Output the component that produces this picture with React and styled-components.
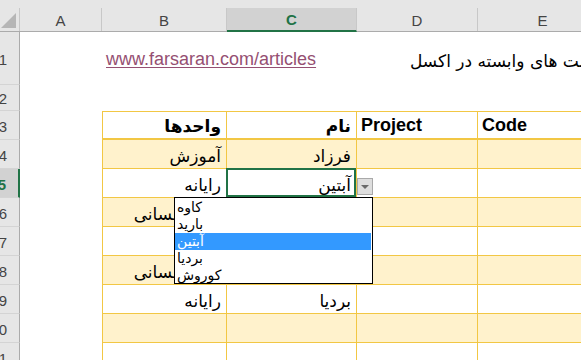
import React from "react";
import styled, { createGlobalStyle } from "styled-components";

const GlobalStyle = createGlobalStyle`
  * { box-sizing: border-box; }
  html, body { margin: 0; padding: 0; background: #ffffff; }
  body {
    width: 581px;
    height: 360px;
    overflow: hidden;
    font-family: "Liberation Sans", "DejaVu Sans", sans-serif;
  }
`;

const COLS = [
  { key: "A", w: 82 },
  { key: "B", w: 125 },
  { key: "C", w: 130 },
  { key: "D", w: 121 },
  { key: "E", w: 130 },
];

const YELLOW = "#f2c744";
const FILL = "#fff2cc";
const GREEN = "#217346";

const Sheet = styled.div`
  width: 581px;
  height: 360px;
  overflow: hidden;
  display: flex;
  flex-direction: column;
`;

const TopStrip = styled.div`
  height: 8px;
  flex: none;
  background: #e6e6e6;
`;

const HeaderRow = styled.div`
  display: flex;
  flex: none;
  height: 24px;
  background: #e6e6e6;
  border-bottom: 1px solid #ababab;
`;

const Corner = styled.div`
  position: relative;
  width: 20px;
  flex: none;
  border-right: 1px solid #c8c8c8;

  &::after {
    content: "";
    position: absolute;
    right: 3px;
    bottom: 3px;
    width: 0;
    height: 0;
    border-style: solid;
    border-width: 0 0 15px 15px;
    border-color: transparent transparent #b6b6b6 transparent;
  }
`;

const ColHead = styled.div`
  width: ${(p) => p.$w}px;
  flex: none;
  display: flex;
  align-items: center;
  justify-content: center;
  padding-top: 1px;
  font-size: 15px;
  color: ${(p) => (p.$active ? GREEN : "#444444")};
  font-weight: ${(p) => (p.$active ? 700 : 400)};
  background: ${(p) => (p.$active ? "#d2d2d2" : "transparent")};
  border-right: 1px solid #c8c8c8;
  border-bottom: ${(p) => (p.$active ? `2px solid ${GREEN}` : "none")};
  margin-bottom: ${(p) => (p.$active ? "-1px" : "0")};
`;

const Row = styled.div`
  display: flex;
  flex: none;
  height: ${(p) => p.$h}px;
`;

const RowHead = styled.div`
  width: 20px;
  flex: none;
  display: flex;
  align-items: center;
  justify-content: flex-end;
  overflow: hidden;
  padding: 2px 12px 0 0;
  font-size: 15px;
  color: ${(p) => (p.$active ? GREEN : "#444444")};
  font-weight: ${(p) => (p.$active ? 700 : 400)};
  background: ${(p) => (p.$active ? "#d2d2d2" : "#e6e6e6")};
  border-bottom: 1px solid #d4d4d4;
  border-right: ${(p) => (p.$active ? `2px solid ${GREEN}` : "1px solid #ababab")};
`;

const Cell = styled.div`
  position: relative;
  width: ${(p) => p.$w}px;
  flex: none;
  height: 100%;
  display: flex;
  align-items: flex-end;
  justify-content: ${(p) => (p.$rtl ? "flex-end" : "flex-start")};
  white-space: nowrap;
  padding: 0 5px ${(p) => p.$pb ?? 2}px 4px;
  font-size: 18px;
  font-weight: ${(p) => (p.$bold ? 700 : 400)};
  color: #000000;
  background: ${(p) => (p.$fill ? FILL : "transparent")};
  border-top: ${(p) => (p.$top ? `1px solid ${YELLOW}` : "none")};
  border-left: ${(p) => (p.$left ? `1px solid ${YELLOW}` : "none")};
  border-right: ${(p) => (p.$table ? `1px solid ${YELLOW}` : "none")};
  border-bottom: ${(p) =>
    p.$table ? `${p.$thick ? 2 : 1}px solid ${YELLOW}` : "none"};
  z-index: ${(p) => (p.$selected ? 5 : "auto")};

  ${(p) =>
    p.$selected &&
    `
    box-shadow: inset 0 0 0 2px ${GREEN};
    margin-left: -1px;
    width: ${p.$w + 1}px;
    margin-top: -1px;
    height: calc(100% + 1px);
  `}
`;

const Persian = styled.span`
  font-family: "DejaVu Sans", sans-serif;
  font-size: 17px;
  font-weight: ${(p) => (p.$bold ? 700 : 400)};
`;

const Link = styled.a`
  color: #954f72;
  text-decoration: underline;
  text-underline-offset: 2px;
  font-size: 18px;
`;

const Title = styled.span`
  margin-left: 49px;
  font-family: "DejaVu Sans", sans-serif;
  font-size: 17px;
  color: #000000;
`;

const DropButton = styled.div`
  position: absolute;
  left: calc(100% + 1px);
  top: 10px;
  width: 16px;
  height: 17px;
  background: #dedede;
  border: 1px solid #a9a9a9;
  display: flex;
  align-items: center;
  justify-content: center;

  &::after {
    content: "";
    width: 0;
    height: 0;
    border-style: solid;
    border-width: 4px 4px 0 4px;
    border-color: #6a6a6a transparent transparent transparent;
    margin-top: 1px;
  }
`;

const ListBox = styled.div`
  position: absolute;
  left: -52px;
  top: 100%;
  width: 199px;
  height: 87px;
  background: #ffffff;
  border: 1px solid #000000;
  overflow: hidden;
  display: flex;
  flex-direction: column;
  padding-top: 1px;
  z-index: 10;
`;

const ListItem = styled.div`
  height: 17px;
  flex: none;
  display: flex;
  align-items: center;
  padding-left: 2px;
  margin-right: 1px;
  font-family: "DejaVu Sans", sans-serif;
  font-size: 14px;
  line-height: 17px;
  color: ${(p) => (p.$active ? "#ffffff" : "#000000")};
  background: ${(p) => (p.$active ? "#3399ff" : "transparent")};
`;

const listItems = ["کاوه", "بارید", "آبتین", "بردیا", "کوروش"];

const tableRows = [
  { n: 3, header: true, cells: ["واحدها", "نام", "Project", "Code"] },
  { n: 4, fill: true, cells: ["آموزش", "فرزاد", "", ""] },
  { n: 5, cells: ["رایانه", "آبتین", "", ""] },
  { n: 6, fill: true, cells: ["منابع انسانی", "", "", ""] },
  { n: 7, cells: ["", "", "", ""] },
  { n: 8, fill: true, cells: ["منابع انسانی", "", "", ""] },
  { n: 9, cells: ["رایانه", "بردیا", "", ""] },
  { n: 10, fill: true, cells: ["", "", "", ""] },
  { n: 11, cells: ["", "", "", ""] },
];

function TableRow({ row }) {
  const rtlCols = [true, true, false, false];
  return (
    <Row $h={29}>
      <RowHead $active={row.n === 5}>{row.n}</RowHead>
      <Cell $w={COLS[0].w} />
      {row.cells.map((text, i) => {
        const selected = row.n === 5 && i === 1;
        return (
          <Cell
            key={i}
            $w={COLS[i + 1].w}
            $table
            $left={i === 0}
            $top={row.header}
            $thick={row.header}
            $fill={row.fill}
            $rtl={rtlCols[i]}
            $bold={row.header}
            $selected={selected}
          >
            {text &&
              (rtlCols[i] ? (
                <Persian dir="rtl" $bold={row.header}>
                  {text}
                </Persian>
              ) : (
                text
              ))}
            {selected && (
              <>
                <DropButton />
                <ListBox>
                  {listItems.map((item) => (
                    <ListItem key={item} $active={item === "آبتین"}>
                      <span dir="rtl">{item}</span>
                    </ListItem>
                  ))}
                </ListBox>
              </>
            )}
          </Cell>
        );
      })}
    </Row>
  );
}

export default function App() {
  return (
    <>
      <GlobalStyle />
      <Sheet>
        <TopStrip />
        <HeaderRow>
          <Corner />
          {COLS.map((c) => (
            <ColHead key={c.key} $w={c.w} $active={c.key === "C"}>
              {c.key}
            </ColHead>
          ))}
        </HeaderRow>

        <Row $h={53}>
          <RowHead>1</RowHead>
          <Cell $w={COLS[0].w} />
          <Cell $w={COLS[1].w} $pb={15}>
            <Link href="#">www.farsaran.com/articles</Link>
          </Cell>
          <Cell $w={COLS[2].w} />
          <Cell $w={COLS[3].w} $pb={14}>
            <Title dir="rtl">ایجاد لیست های وابسته در اکسل</Title>
          </Cell>
          <Cell $w={COLS[4].w} />
        </Row>

        <Row $h={26}>
          <RowHead>2</RowHead>
        </Row>

        {tableRows.map((row) => (
          <TableRow key={row.n} row={row} />
        ))}
      </Sheet>
    </>
  );
}
